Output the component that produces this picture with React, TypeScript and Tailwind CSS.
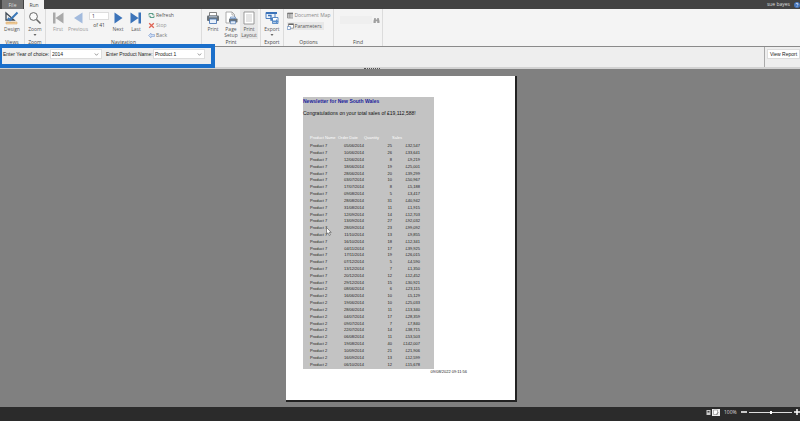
import type { ReactNode } from "react"
import { useState } from "react"

type Row = [product: string, date: string, quantity: number, sales: string]

const rows: Row[] = [
  ["Product 7", "05/06/2014", 25, "£32,547"],
  ["Product 7", "10/06/2014", 26, "£33,641"],
  ["Product 7", "12/06/2014", 8, "£9,219"],
  ["Product 7", "18/06/2014", 19, "£25,001"],
  ["Product 7", "28/06/2014", 20, "£39,299"],
  ["Product 7", "03/07/2014", 10, "£50,967"],
  ["Product 7", "17/07/2014", 8, "£5,188"],
  ["Product 7", "09/08/2014", 5, "£3,417"],
  ["Product 7", "28/08/2014", 31, "£40,942"],
  ["Product 7", "31/08/2014", 11, "£1,915"],
  ["Product 7", "12/09/2014", 14, "£12,703"],
  ["Product 7", "13/09/2014", 27, "£92,032"],
  ["Product 7", "28/09/2014", 23, "£99,092"],
  ["Product 7", "11/10/2014", 13, "£9,855"],
  ["Product 7", "16/10/2014", 18, "£12,341"],
  ["Product 7", "04/11/2014", 17, "£39,925"],
  ["Product 7", "17/11/2014", 19, "£26,015"],
  ["Product 7", "07/12/2014", 5, "£4,590"],
  ["Product 7", "13/12/2014", 7, "£1,350"],
  ["Product 7", "20/12/2014", 12, "£12,452"],
  ["Product 7", "29/12/2014", 15, "£30,921"],
  ["Product 2", "08/06/2014", 6, "£23,115"],
  ["Product 2", "16/06/2014", 10, "£5,129"],
  ["Product 2", "19/06/2014", 10, "£25,033"],
  ["Product 2", "28/06/2014", 11, "£13,340"],
  ["Product 2", "04/07/2014", 17, "£28,359"],
  ["Product 2", "09/07/2014", 7, "£7,840"],
  ["Product 2", "22/07/2014", 14, "£38,715"],
  ["Product 2", "06/08/2014", 11, "£53,503"],
  ["Product 2", "19/08/2014", 40, "£142,007"],
  ["Product 2", "10/09/2014", 21, "£21,906"],
  ["Product 2", "16/09/2014", 13, "£12,599"],
  ["Product 2", "06/10/2014", 12, "£15,678"],
]

function DesignIcon() {
  return (
    <svg viewBox="0 0 14 14" className="size-3.5">
      <path d="M1 2v7h8z" fill="none" stroke="#3f4a55" strokeWidth="1.3" />
      <path d="M3 7 5 9 12.500 1.500" fill="none" stroke="#3b78b8" strokeWidth="2" />
      <path d="M1 11h11v2H1z" fill="#f3d3a4" stroke="#d9a35c" strokeWidth=".5" />
      <path d="M3 11v1M5 11v1M7 11v1M9 11v1" stroke="#a87b3c" strokeWidth=".4" />
    </svg>
  )
}

function ZoomIcon() {
  return (
    <svg viewBox="0 0 14 14" className="size-3.5" fill="none">
      <circle cx="5.500" cy="5.500" r="3.900" stroke="#666" strokeWidth="1" fill="#fafafa" />
      <path d="m8.500 8.500 4 4" stroke="#666" strokeWidth="1.600" />
    </svg>
  )
}

function FirstIcon() {
  return (
    <svg viewBox="0 0 14 14" className="size-3.5" fill="#a9a9a9">
      <path d="M2 1.500h2.500v11H2zM12.500 1.500v11L4.500 7z" />
    </svg>
  )
}

function PreviousIcon() {
  return (
    <svg viewBox="0 0 14 14" className="size-3.5">
      <path d="M11.500 1.500v11L3 7z" fill="#a3bbdd" />
    </svg>
  )
}

function NextIcon() {
  return (
    <svg viewBox="0 0 14 14" className="size-3.5">
      <path d="M3.500 1.500v11L11.500 7z" fill="#3b73b9" />
    </svg>
  )
}

function LastIcon() {
  return (
    <svg viewBox="0 0 14 14" className="size-3.5" fill="#3b73b9">
      <path d="M9.500 1.500H12v11H9.500zM1.500 1.500v11L9.500 7z" />
    </svg>
  )
}

function RefreshIcon() {
  return (
    <svg viewBox="0 0 7 7" className="size-[7px]" fill="none" stroke="#5f9f8a" strokeWidth="1">
      <path d="M1 3.500V1.500h4v1M6 3.500v2H2v-1" />
      <path d="m4 2 1 1.200L6.200 2M.8 5 2 3.800 3 5" strokeWidth=".8" />
    </svg>
  )
}

function StopIcon() {
  return (
    <svg viewBox="0 0 7 7" className="size-[7px]" stroke="#df6455" strokeWidth="1.300">
      <path d="m1.200 1.200 4.600 4.600M5.800 1.200 1.200 5.800" />
    </svg>
  )
}

function BackIcon() {
  return (
    <svg viewBox="0 0 7 7" className="size-[7px]">
      <path d="M.5 3.500 3 1v1.500h3.500v2H3V6z" fill="#cfdcf2" stroke="#7f9fd4" strokeWidth=".6" />
    </svg>
  )
}

function PrintIcon() {
  return (
    <svg viewBox="0 0 14 14" className="size-3.5">
      <path d="M3.500 1.500h7V5h-7z" fill="#fff" stroke="#666" strokeWidth=".8" />
      <rect x="1" y="4.500" width="12" height="5.500" rx="1" fill="#6b7278" />
      <path d="M3 5.800h8" stroke="#b9cbe0" strokeWidth="1" />
      <path d="M3.500 8h7v4.500h-7z" fill="#e8f0fa" stroke="#4b78b5" strokeWidth=".9" />
    </svg>
  )
}

function PageSetupIcon() {
  return (
    <svg viewBox="0 0 14 14" className="size-3.5">
      <path d="M2 1h6l2.500 2.500V12H2z" fill="#fff" stroke="#999" strokeWidth=".8" />
      <path d="M8 1v3h2.500" fill="none" stroke="#999" strokeWidth=".7" />
      <rect x="5" y="7.500" width="8.500" height="4" rx=".7" fill="#6b7278" />
      <path d="M6.500 6h5v1.500h-5zM6.500 10h5v2.800h-5z" fill="#dfeaf8" stroke="#4b78b5" strokeWidth=".6" />
    </svg>
  )
}

function PrintLayoutIcon() {
  return (
    <svg viewBox="0 0 14 14" className="size-3.5">
      <path d="M2 1h10v12H2z" fill="#fff" stroke="#909090" strokeWidth=".9" />
      <path d="M4 4h6M4 6h6M4 8h6M4 10h6" stroke="#b5b5b5" strokeWidth=".7" />
    </svg>
  )
}

function ExportIcon() {
  return (
    <svg viewBox="0 0 14 14" className="size-3.5">
      <path d="M1 1.500h9v6H1z" fill="#eef4fb" stroke="#3b73b9" strokeWidth=".9" />
      <path d="M1 1h11v2H1z" fill="#3b73b9" />
      <path d="M3 4.500h3V9h3" fill="none" stroke="#3b73b9" strokeWidth="1.300" />
      <path d="M7.500 6.500H13v6H7.500z" fill="#fff" stroke="#3b73b9" strokeWidth=".8" />
      <path d="M8 9.500h3V8l2.500 2.500L11 13v-1.500H8z" fill="#5b8fcc" />
    </svg>
  )
}

function DocumentMapIcon() {
  return (
    <svg viewBox="0 0 7 7" className="size-[7px]">
      <path d="M.5 1h6v5h-6z" fill="#ddd" stroke="#777" strokeWidth=".7" />
      <path d="M.5 1h6v1.300h-6z" fill="#777" />
      <path d="M2.800 2v4M.5 4h6" stroke="#888" strokeWidth=".6" />
    </svg>
  )
}

function ParametersIcon() {
  return (
    <svg viewBox="0 0 7 7" className="size-[7px]">
      <path d="M1.500.8h5v4.400h-5z" fill="#fff" stroke="#666" strokeWidth=".6" />
      <path d="M1.500.7h5V2h-5z" fill="#666" />
      <path d="M.4 3.500h3v3h-3z" fill="#fff" stroke="#4b78b5" strokeWidth=".6" />
    </svg>
  )
}

function BinocularsIcon() {
  return (
    <svg viewBox="0 0 7 7" className="size-[7px]" fill="#a0a0a0">
      <path d="M1.300 1h1.500v1.500h1.400V1h1.500L6.500 4v2H4.200V4.200H2.800V6H.5V4z" />
    </svg>
  )
}

function Chevron() {
  return (
    <svg viewBox="0 0 5 5" className="pointer-events-none absolute top-0.5 right-0.5 size-[5px]">
      <path d="m.8 1.500 1.700 1.800 1.700-1.800" fill="none" stroke="#555" strokeWidth=".6" />
    </svg>
  )
}

function Group({ label, className, children }: { label: string; className: string; children: ReactNode }) {
  return (
    <section className={`flex shrink-0 flex-col border-r border-[#dcdcdc] ${className}`}>
      <div className="flex h-[31px] items-start justify-center">{children}</div>
      <div className="text-center leading-[7px] text-[#444]">{label}</div>
    </section>
  )
}

interface BigButtonProps {
  icon: ReactNode
  label: string
  className: string
  menu?: boolean
}

function BigButton({ icon, label, className, menu }: BigButtonProps) {
  return (
    <button className={`flex flex-col items-center pt-0.5 text-center leading-[6px] ${className}`}>
      {icon}
      <span className="mt-px">{label}</span>
      {menu && (
        <svg viewBox="0 0 4 2" className="mt-0.5 h-0.5 w-1">
          <path d="M.5 0h3L2 2z" fill="#666" />
        </svg>
      )}
    </button>
  )
}

function SmallButton({ icon, label, className }: { icon: ReactNode; label: string; className?: string }) {
  return (
    <button className={`flex items-center gap-px leading-[8px] whitespace-nowrap ${className ?? ""}`}>
      {icon}
      {label}
    </button>
  )
}

function Ribbon() {
  const [page, setPage] = useState("1")

  return (
    <div className="flex h-[38px] overflow-hidden border-b border-[#8a8a8a] bg-[#f4f4f4] text-[#555]">
      <Group label="Views" className="w-[25px]">
        <BigButton icon={<DesignIcon />} label="Design" className="w-5" />
      </Group>
      <Group label="Zoom" className="w-[21px]">
        <BigButton icon={<ZoomIcon />} label="Zoom" className="w-5" menu />
      </Group>
      <Group label="Navigation" className="w-[156px]">
        <div className="flex flex-1 pl-[3px]">
          <BigButton icon={<FirstIcon />} label="First" className="w-[18px] text-[#999]" />
          <BigButton icon={<PreviousIcon />} label="Previous" className="w-[22px] text-[#999]" />
          <div className="flex w-5 flex-col pt-[3px]">
            <input
              aria-label="Page number"
              value={page}
              onChange={(e) => setPage(e.target.value)}
              className="h-2 w-5 border border-[#ddd] bg-white px-0.5 text-[#333]"
            />
            <span className="mt-0.5 text-center leading-[7px] text-[#444]">of 41</span>
          </div>
          <BigButton icon={<NextIcon />} label="Next" className="w-[18px]" />
          <BigButton icon={<LastIcon />} label="Last" className="w-[18px]" />
          <div className="flex flex-col gap-0.5 pt-0.5 pl-[3px]">
            <SmallButton icon={<RefreshIcon />} label="Refresh" />
            <SmallButton icon={<StopIcon />} label="Stop" className="text-[#999]" />
            <SmallButton icon={<BackIcon />} label="Back" className="text-[#777]" />
          </div>
        </div>
      </Group>
      <Group label="Print" className="w-[59px]">
        <BigButton icon={<PrintIcon />} label="Print" className="w-[18px]" />
        <BigButton icon={<PageSetupIcon />} label="Page Setup" className="w-[18px]" />
        <BigButton icon={<PrintLayoutIcon />} label="Print Layout" className="w-[18px] bg-[#e8e8e8] pb-px" />
      </Group>
      <Group label="Export" className="w-[23px]">
        <BigButton icon={<ExportIcon />} label="Export" className="w-5" menu />
      </Group>
      <Group label="Options" className="w-[50px]">
        <div className="flex w-11 flex-col gap-[3px] pt-0.5">
          <SmallButton icon={<DocumentMapIcon />} label="Document Map" className="text-[#888]" />
          <SmallButton icon={<ParametersIcon />} label="Parameters" className="self-start bg-[#e8e8e8] pr-0.5" />
        </div>
      </Group>
      <Group label="Find" className="w-[49px]">
        <div className="flex items-center gap-px pt-[7px] pl-1">
          <input aria-label="Find text" className="h-2 w-8 bg-[#efefef] px-0.5" />
          <button aria-label="Find">
            <BinocularsIcon />
          </button>
        </div>
      </Group>
    </div>
  )
}

function Parameters() {
  return (
    <form
      className="relative flex h-5 items-stretch bg-[#eee] font-['Liberation_Sans',Arial,sans-serif] text-[#222]"
      onSubmit={(e) => e.preventDefault()}
    >
      <div className="flex items-start pt-[3px] pl-[3px] leading-[8px] whitespace-nowrap">
        <label htmlFor="year" className="w-12">
          Enter Year of choice:
        </label>
        <div className="relative">
          <select id="year" defaultValue="2014" className="block h-2 w-[50px] appearance-none bg-white pl-px outline-1 outline-[#ddd]">
            <option>2013</option>
            <option>2014</option>
          </select>
          <Chevron />
        </div>
        <label htmlFor="product" className="ml-[5px] w-12">
          Enter Product Name:
        </label>
        <div className="relative">
          <select
            id="product"
            defaultValue="Product 1"
            className="block h-2 w-[50px] appearance-none bg-white pl-px outline-1 outline-[#ddd]"
          >
            <option>Product 1</option>
            <option>Product 2</option>
            <option>Product 7</option>
          </select>
          <Chevron />
        </div>
      </div>
      <div className="ml-auto border-l border-[#aaa] pt-[3px] pr-px pl-[3px]">
        <button className="block h-2 w-[31px] bg-white text-center leading-[8px] whitespace-nowrap outline-1 outline-[#ddd]">
          View Report
        </button>
      </div>
      {/* highlight frame around the report parameters */}
      <div className="pointer-events-none absolute -top-[3px] left-0 h-6 w-[215px] border-4 border-l-2 border-[#1b6fca]" />
    </form>
  )
}

function Report() {
  return (
    <article className="relative mx-auto h-[326px] w-[231px] border-r-2 border-b-2 border-[#222] bg-white pt-[21px] pl-[17px] font-['Liberation_Sans',Arial,sans-serif]">
      <div className="w-[131px] bg-[#c3c3c3] pb-px">
        <h1 className="text-[5px] leading-[8px] font-bold whitespace-nowrap text-[#1b1b9c]">Newsletter for New South Wales</h1>
        <p className="mt-1 text-[5px] leading-[9px] whitespace-nowrap text-[#111]">
          Congratulations on your total sales of £19,112,588!
        </p>
        <table className="mt-[17px] ml-[7px] h-[233px] w-[110px] table-fixed border-collapse text-[4px] leading-[6px] whitespace-nowrap text-[#222]">
          <thead>
            <tr className="text-left text-white">
              <th className="w-7 pb-0.5 font-normal">Product Name</th>
              <th className="w-[26px] pb-0.5 font-normal">Order Date</th>
              <th className="w-7 pb-0.5 font-normal">Quantity</th>
              <th className="w-7 pb-0.5 font-normal">Sales</th>
            </tr>
          </thead>
          <tbody>
            {rows.map(([product, date, quantity, sales]) => (
              <tr key={product + date}>
                <td>{product}</td>
                <td className="text-right">{date}</td>
                <td className="text-right">{quantity}</td>
                <td className="text-right">{sales}</td>
              </tr>
            ))}
          </tbody>
        </table>
      </div>
      <time className="block pr-12 text-right text-[4px] leading-[6px] text-[#222]">09/08/2022 09:11:56</time>
      <svg viewBox="0 0 6 9" className="absolute top-[151px] left-10 h-[9px] w-1.5">
        <path d="M.5.5v6.700l1.500-1.400 1.200 2.700 1.200-.6-1.200-2.500h2z" fill="#fff" stroke="#333" strokeWidth=".5" />
      </svg>
    </article>
  )
}

function StatusBar() {
  const [zoom, setZoom] = useState(50)

  return (
    <footer className="flex h-3.5 items-center justify-end bg-[#2b2b2b] pb-1 text-[#ddd]">
      <button aria-label="Print layout" className="mr-px">
        <svg viewBox="0 0 5 7" className="h-[7px] w-[5px]">
          <path d="M.5 1h4v5h-4z" fill="#ccc" />
          <path d="M1.500 2h2v1.500h-2z" fill="#444" />
        </svg>
      </button>
      <button aria-label="Page view" className="bg-[#eee]">
        <svg viewBox="0 0 8 7" className="h-[7px] w-2">
          <path d="M1.500 1h4v4.500h-4z" fill="#fff" stroke="#888" strokeWidth=".6" />
          <path d="m4 5.500 2.500-2" stroke="#777" strokeWidth=".8" />
        </svg>
      </button>
      <span className="ml-1 w-[17px] leading-[8px]">100%</span>
      <button aria-label="Zoom out" onClick={() => setZoom(Math.max(0, zoom - 10))}>
        <svg viewBox="0 0 6 6" className="size-1.5">
          <path d="M0 3h6" stroke="#fff" strokeWidth="1.500" />
        </svg>
      </button>
      <input
        type="range"
        aria-label="Zoom level"
        value={zoom}
        onChange={(e) => setZoom(Number(e.target.value))}
        className="mx-0.5 h-px w-[43px] appearance-none bg-[#ddd] [&::-webkit-slider-thumb]:h-[3px] [&::-webkit-slider-thumb]:w-0.5 [&::-webkit-slider-thumb]:appearance-none [&::-webkit-slider-thumb]:bg-white"
      />
      <button aria-label="Zoom in" onClick={() => setZoom(Math.min(100, zoom + 10))}>
        <svg viewBox="0 0 6 6" className="size-1.5">
          <path d="M0 3h6M3 0v6" stroke="#fff" strokeWidth="1.500" />
        </svg>
      </button>
    </footer>
  )
}

export default function App() {
  return (
    <div className="flex min-h-screen flex-col bg-[#808080] font-['Open_Sans','Noto_Sans',sans-serif] text-[5px]">
      <header className="flex h-[9px] items-stretch bg-[#434343] leading-[8px]">
        <button className="ml-0.5 w-[21px] bg-[#747474] text-[#ddd]">File</button>
        <button className="ml-px w-5 bg-[#f4f4f4] text-[#444]">Run</button>
        <span className="ml-auto text-[#ddd]">sue bayes</span>
        <button aria-label="Help" className="ml-1">
          <svg viewBox="0 0 6 6" className="size-1.5">
            <circle cx="3" cy="3" r="3" fill="#4777bd" />
            <path d="M2 2.200q0-1 1-1t1 1q0 .6-1 1.200M3 4.200v.7" fill="none" stroke="#fff" strokeWidth=".7" />
          </svg>
        </button>
      </header>
      <Ribbon />
      <Parameters />
      <div className="flex h-0.5 items-center justify-center bg-[#d2d2d2] pr-14">
        <span className="w-4 border-t border-dotted border-[#555]" />
      </div>
      <main className="flex-1 pt-[7px] pb-[5px] pl-[3px]">
        <Report />
      </main>
      <StatusBar />
    </div>
  )
}
